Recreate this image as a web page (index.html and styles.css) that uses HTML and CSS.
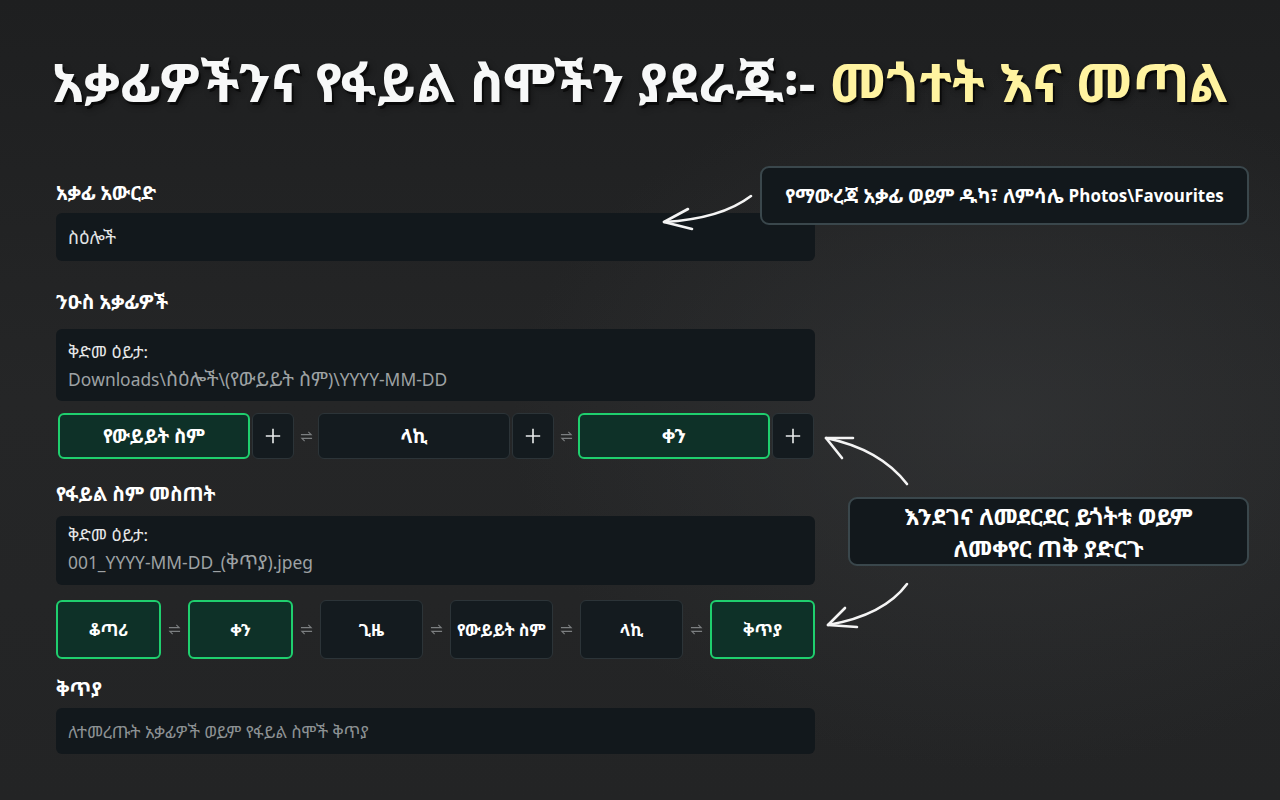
FILE: index.html
```html
<!DOCTYPE html>
<html lang="am">
<head>
<meta charset="utf-8">
<title>Organizer</title>
<link rel="stylesheet" href="styles.css">
</head>
<body>
<div class="page">
  <h1 class="title">አቃፊዎችንና የፋይል ስሞችን ያደራጁ፡- <span class="accent">መጎተት እና መጣል</span></h1>

  <main class="form">
    <div class="field">
      <div class="label">አቃፊ አውርድ</div>
      <div class="input">ስዕሎች</div>
    </div>

    <div class="field f-sub">
      <div class="label">ንዑስ አቃፊዎች</div>
      <div class="preview">
        <div class="pv-title">ቅድመ ዕይታ:</div>
        <div class="pv-value">Downloads\<span class="eth">ስዕሎች</span>\(<span class="eth">የውይይት ስም</span>)\YYYY-MM-DD</div>
      </div>
      <div class="chips chips-a">
        <div class="chip on">የውይይት ስም</div>
        <div class="plus"><svg viewBox="0 0 20 20" width="18" height="18"><path d="M10 2v16M2 10h16" stroke="#e8eaeb" stroke-width="1.8"/></svg></div>
        <div class="swap"><svg viewBox="0 0 14 14" width="13" height="13"><path d="M1 5h11l-3-3M13 9H2l3 3" fill="none" stroke="#7c7f81" stroke-width="1.2"/></svg></div>
        <div class="chip">ላኪ</div>
        <div class="plus"><svg viewBox="0 0 20 20" width="18" height="18"><path d="M10 2v16M2 10h16" stroke="#e8eaeb" stroke-width="1.8"/></svg></div>
        <div class="swap"><svg viewBox="0 0 14 14" width="13" height="13"><path d="M1 5h11l-3-3M13 9H2l3 3" fill="none" stroke="#7c7f81" stroke-width="1.2"/></svg></div>
        <div class="chip on">ቀን</div>
        <div class="plus"><svg viewBox="0 0 20 20" width="18" height="18"><path d="M10 2v16M2 10h16" stroke="#e8eaeb" stroke-width="1.8"/></svg></div>
      </div>
    </div>

    <div class="field f-file">
      <div class="label">የፋይል ስም መስጠት</div>
      <div class="preview p2">
        <div class="pv-title">ቅድመ ዕይታ:</div>
        <div class="pv-value">001_YYYY-MM-DD_(<span class="eth">ቅጥያ</span>).jpeg</div>
      </div>
      <div class="chips chips-b">
        <div class="chip on">ቆጣሪ</div>
        <div class="swap"><svg viewBox="0 0 14 14" width="13" height="13"><path d="M1 5h11l-3-3M13 9H2l3 3" fill="none" stroke="#7c7f81" stroke-width="1.2"/></svg></div>
        <div class="chip on">ቀን</div>
        <div class="swap"><svg viewBox="0 0 14 14" width="13" height="13"><path d="M1 5h11l-3-3M13 9H2l3 3" fill="none" stroke="#7c7f81" stroke-width="1.2"/></svg></div>
        <div class="chip">ጊዜ</div>
        <div class="swap"><svg viewBox="0 0 14 14" width="13" height="13"><path d="M1 5h11l-3-3M13 9H2l3 3" fill="none" stroke="#7c7f81" stroke-width="1.2"/></svg></div>
        <div class="chip">የውይይት ስም</div>
        <div class="swap"><svg viewBox="0 0 14 14" width="13" height="13"><path d="M1 5h11l-3-3M13 9H2l3 3" fill="none" stroke="#7c7f81" stroke-width="1.2"/></svg></div>
        <div class="chip">ላኪ</div>
        <div class="swap"><svg viewBox="0 0 14 14" width="13" height="13"><path d="M1 5h11l-3-3M13 9H2l3 3" fill="none" stroke="#7c7f81" stroke-width="1.2"/></svg></div>
        <div class="chip on">ቅጥያ</div>
      </div>
    </div>

    <div class="field f-ext">
      <div class="label">ቅጥያ</div>
      <div class="input placeholder">ለተመረጡት አቃፊዎች ወይም የፋይል ስሞች ቅጥያ</div>
    </div>
  </main>

  <div class="tip tip1">የማውረጃ አቃፊ ወይም ዱካ፣ ለምሳሌ&nbsp;<span class="lat">Photos\Favourites</span></div>
  <div class="tip tip2"><span class="tl">እንደገና ለመደርደር ይጎትቱ ወይም</span><span class="tl">ለመቀየር ጠቅ ያድርጉ</span></div>

  <svg class="arrows" viewBox="0 0 1280 800" width="1280" height="800">
    <g fill="none" stroke="#f4f4f4" stroke-width="2.6" stroke-linecap="round" stroke-linejoin="round">
      <path d="M751 196 C 730 212, 700 220, 664 222"/>
      <path d="M688 209 L 664 222 L 692 229"/>
      <path d="M907 484 C 890 462, 865 446, 826 438"/>
      <path d="M853 438 L 826 438 L 842 458"/>
      <path d="M907 584 C 893 603, 868 618, 828 625"/>
      <path d="M845 608 L 828 625 L 857 627"/>
    </g>
  </svg>
</div>
</body>
</html>
```

FILE: styles.css
```css
* { box-sizing: border-box; }
html, body { margin: 0; padding: 0; }
body {
  width: 1280px;
  height: 800px;
  overflow: hidden;
  font-family: "Noto Sans Ethiopic", "Abyssinica SIL", "Noto Sans", "DejaVu Sans", sans-serif;
  color: #f2f3f4;
  background: #232425;
}
.page {
  position: relative;
  width: 1280px;
  height: 800px;
  background:
    radial-gradient(ellipse 700px 500px at 1000px 420px, rgba(60,62,64,0.45), rgba(60,62,64,0) 70%),
    linear-gradient(180deg, #1e1f20 0%, #252627 50%, #232425 100%);
  padding-top: 50px;
}
.title {
  margin: 0;
  text-align: center;
  font-size: 53px;
  line-height: 64px;
  font-weight: 700;
  color: #f7f8f8;
  letter-spacing: 0.3px;
  white-space: nowrap;
  text-shadow: 2px 3px 0 rgba(0,0,0,0.55), 3px 4px 6px rgba(0,0,0,0.4);
}
.accent { color: #fff3a0; }

.form {
  width: 759px;
  margin: 68px 0 0 56px;
  display: flex;
  flex-direction: column;
}
.label {
  font-size: 19.5px;
  font-weight: 700;
  line-height: 22px;
  height: 22px;
  color: #ffffff;
  margin-bottom: 9px;
}
.input {
  height: 48px;
  background: #12181c;
  border-radius: 6px;
  padding: 0 12px;
  display: flex;
  align-items: center;
  font-size: 17.8px;
  color: #e2e4e5;
}
.input.placeholder { height: 46px; font-size: 17px; color: #8c9193; }
.f-sub { margin-top: 30px; }
.f-sub .label { margin-bottom: 16px; }
.preview {
  height: 72px;
  background: #12181c;
  border-radius: 6px;
  padding: 12px 12px 0;
}
.preview.p2 { height: 69px; padding-top: 8px; }
.pv-title { font-size: 17px; line-height: 22px; height: 22px; color: #e6e7e8; }
.pv-value { font-size: 17.4px; line-height: 26px; height: 26px; color: #9ea2a4; margin-top: 3px; white-space: nowrap; }
.eth { font-size: 1.12em; }

.chips { display: flex; align-items: stretch; }
.chips-a { margin: 12px 0 0 2px; height: 46px; }
.chip {
  display: flex;
  align-items: center;
  justify-content: center;
  background: #141b1f;
  border: 1px solid #2c3438;
  border-radius: 6px;
  font-size: 19px;
  font-weight: 700;
  color: #ffffff;
  white-space: nowrap;
}
.chip.on {
  background: #0e3128;
  border: 2px solid #1fcf6e;
}
.chips-a .chip { width: 192px; }
.plus {
  width: 42px;
  margin-left: 2px;
  display: flex;
  align-items: center;
  justify-content: center;
  background: #141b1f;
  border: 1px solid #2c3438;
  border-radius: 6px;
}
.swap {
  width: 24px;
  display: flex;
  align-items: center;
  justify-content: center;
}
.chips-b { margin-top: 15px; height: 59px; }
.chips-b .chip { flex: 1; font-size: 16.5px; }
.chips-b .swap { width: 27px; }

.f-file { margin-top: 24px; }
.f-file .label { margin-bottom: 11px; }
.f-ext { margin-top: 19px; }
.f-ext .label { margin-bottom: 8px; }

.tip {
  position: absolute;
  background: #12181c;
  border: 2px solid #3a474c;
  border-radius: 9px;
  color: #ffffff;
  font-weight: 700;
  text-align: center;
  display: flex;
  align-items: center;
  justify-content: center;
  white-space: nowrap;
}
.tip1 {
  left: 760px; top: 166px; width: 489px; height: 59px;
  font-size: 19.5px;
}
.lat { font-size: 0.87em; }
.tip2 {
  left: 848px; top: 497px; width: 401px; height: 69px;
  flex-direction: column;
  font-size: 23px;
}
.tl { display: block; line-height: 32px; }
.arrows { position: absolute; left: 0; top: 0; pointer-events: none; }
```
